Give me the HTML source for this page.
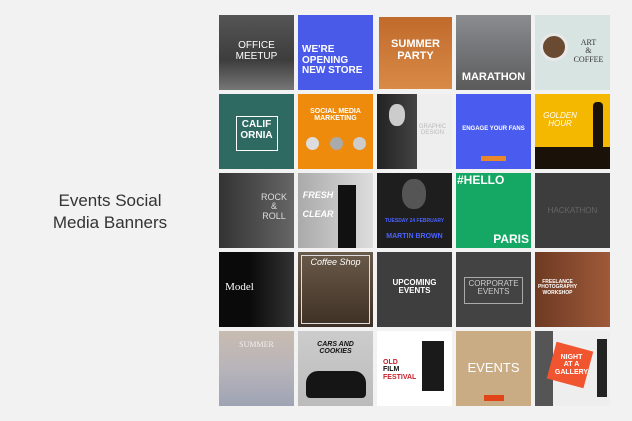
<!DOCTYPE html><html><head><style>
body{margin:0;width:632px;height:421px;background:#f2f2f2;position:relative;overflow:hidden;font-family:"Liberation Sans",sans-serif}
.t{position:absolute;width:75px;height:75px;overflow:hidden;color:#fff;text-align:center;font-weight:bold}
.c{position:absolute;left:0;right:0;line-height:1.05}
.h{position:absolute;left:0;top:0;width:632px}
</style></head><body>
<div style="position:absolute;left:30px;top:190px;width:160px;text-align:center;font-size:17px;color:#333;line-height:22px">Events Social<br>Media Banners</div>

<!-- row1 -->
<div class="t" style="left:219px;top:15px;background:linear-gradient(#555,#3d3d3d 60%,#777)"><div class="c" style="top:26px;font-size:10px;font-weight:normal">OFFICE<br>MEETUP</div></div>
<div class="t" style="left:298px;top:15px;background:#4a5ae8"><div class="c" style="top:30px;font-size:10px;text-align:left;left:4px">WE'RE<br>OPENING<br>NEW STORE</div></div>
<div class="t" style="left:379px;top:17px;width:73px;height:72px;background:linear-gradient(#c06a2c,#d98a46)"><div class="c" style="top:22px;font-size:11px">SUMMER<br>PARTY</div></div>
<div class="t" style="left:456px;top:15px;background:linear-gradient(#8a8c90,#5b5b5b)"><div class="c" style="top:57px;font-size:11px">MARATHON</div></div>
<div class="t" style="left:535px;top:15px;background:#d8e4e2;color:#333"><div style="position:absolute;left:5px;top:18px;width:22px;height:22px;border-radius:50%;background:#6a4a30;border:3px solid #e8e8e8"></div><div class="c" style="left:32px;top:24px;font-size:8px;font-family:'Liberation Serif',serif;font-weight:normal">ART<br>&amp;<br>COFFEE</div></div>

<!-- row2 -->
<div class="t" style="left:219px;top:94px;background:#2f6a62"><div style="position:absolute;left:17px;top:22px;width:40px;height:33px;border:1px solid #fff"></div><div class="c" style="top:26px;font-size:10px">CALIF<br>ORNIA</div></div>
<div class="t" style="left:298px;top:94px;background:#ee8a0c"><div class="c" style="top:14px;font-size:7px">SOCIAL MEDIA<br>MARKETING</div><div style="position:absolute;top:43px;left:8px;width:13px;height:13px;border-radius:50%;background:#ddd;box-shadow:24px 0 #aaa,47px 0 #ccc"></div></div>
<div class="t" style="left:377px;top:94px;background:#eee"><div style="position:absolute;left:0;top:0;width:40px;height:75px;background:linear-gradient(90deg,#222,#444)"></div><div style="position:absolute;left:12px;top:10px;width:16px;height:22px;border-radius:45%;background:#ccc"></div><div class="c" style="left:36px;top:30px;font-size:6px;color:#bbb;font-weight:normal">GRAPHIC<br>DESIGN</div></div>
<div class="t" style="left:456px;top:94px;background:#4a5cf0"><div class="c" style="top:32px;font-size:6px">ENGAGE YOUR FANS</div><div style="position:absolute;left:25px;top:62px;width:25px;height:5px;background:#e8882a"></div></div>
<div class="t" style="left:535px;top:94px;background:#f5b800"><div class="c" style="top:18px;left:-25px;font-size:8px;font-style:italic;font-weight:normal">GOLDEN<br>HOUR</div><div style="position:absolute;left:0;bottom:0;width:75px;height:22px;background:#1a1208"></div><div style="position:absolute;left:58px;top:8px;width:10px;height:48px;background:#1a1208;border-radius:4px"></div></div>

<!-- row3 -->
<div class="t" style="left:219px;top:173px;background:linear-gradient(90deg,#333,#666)"><div class="c" style="top:20px;left:35px;font-size:9px;font-weight:normal;color:#ddd">ROCK<br>&amp;<br>ROLL</div></div>
<div class="t" style="left:298px;top:173px;background:linear-gradient(90deg,#aaa,#ddd)"><div class="c" style="top:18px;left:-35px;font-size:9px;font-style:italic">FRESH<br><br>CLEAR</div><div style="position:absolute;left:40px;top:12px;width:18px;height:63px;background:#111"></div></div>
<div class="t" style="left:377px;top:173px;background:#1e1e1e"><div style="position:absolute;left:25px;top:6px;width:24px;height:30px;border-radius:45%;background:#555"></div><div class="c" style="top:46px;font-size:5px;color:#4a62ff">TUESDAY 24 FEBRUARY</div><div class="c" style="top:60px;font-size:7px;color:#4a62ff">MARTIN BROWN</div></div>
<div class="t" style="left:456px;top:173px;background:#15a865"><div class="c" style="top:1px;left:-8px;font-size:12px;text-align:left;left:1px">#HELLO</div><div class="c" style="top:60px;font-size:12px;text-align:right;right:2px">PARIS</div></div>
<div class="t" style="left:535px;top:173px;background:#3d3d3d"><div class="c" style="top:34px;font-size:8px;font-weight:normal;color:#666">HACKATHON</div></div>

<!-- row4 -->
<div class="t" style="left:219px;top:252px;background:linear-gradient(90deg,#0a0a0a 40%,#333)"><div class="c" style="top:30px;left:-34px;font-size:11px;font-family:'Liberation Serif',serif;font-weight:normal">Model</div></div>
<div class="t" style="left:298px;top:252px;background:linear-gradient(#6a5a4a,#3e3024)"><div style="position:absolute;left:3px;top:3px;right:3px;bottom:3px;border:1px solid #ddd"></div><div class="c" style="top:6px;font-size:9px;font-style:italic;font-weight:normal">Coffee Shop</div></div>
<div class="t" style="left:377px;top:252px;background:#3e3e3e"><div class="c" style="top:27px;font-size:8px">UPCOMING<br>EVENTS</div></div>
<div class="t" style="left:456px;top:252px;background:#434343"><div style="position:absolute;left:8px;top:25px;width:57px;height:25px;border:1px solid #aaa"></div><div class="c" style="top:28px;font-size:8px;font-weight:normal;color:#ccc">CORPORATE<br>EVENTS</div></div>
<div class="t" style="left:535px;top:252px;background:linear-gradient(90deg,#6e3a22,#9e5a3a)"><div class="c" style="top:28px;left:-30px;font-size:5px">FREELANCE<br>PHOTOGRAPHY<br>WORKSHOP</div></div>

<!-- row5 -->
<div class="t" style="left:219px;top:331px;background:linear-gradient(#c8bcb0,#b8b4ba 50%,#9ea4b4)"><div class="c" style="top:10px;font-size:8px;font-family:'Liberation Serif',serif;font-weight:normal;color:#eee">SUMMER</div></div>
<div class="t" style="left:298px;top:331px;background:linear-gradient(#ccc,#bbb)"><div class="c" style="top:10px;font-size:7px;color:#111;font-style:italic">CARS AND<br>COOKIES</div><div style="position:absolute;left:8px;top:40px;width:60px;height:27px;border-radius:12px 12px 4px 4px;background:#151515"></div></div>
<div class="t" style="left:377px;top:331px;background:#fff"><div class="c" style="top:28px;left:6px;text-align:left;font-size:7px;color:#c8202a">OLD<br><span style="color:#111">FILM</span><br>FESTIVAL</div><div style="position:absolute;left:45px;top:10px;width:22px;height:50px;background:#1a1a1a"></div></div>
<div class="t" style="left:456px;top:331px;background:#c9ab84"><div class="c" style="top:30px;font-size:13px;font-weight:normal">EVENTS</div><div style="position:absolute;left:28px;top:64px;width:20px;height:6px;background:#e04418"></div></div>
<div class="t" style="left:535px;top:331px;background:#eee"><div style="position:absolute;left:0;top:0;width:18px;height:75px;background:#555"></div><div style="position:absolute;left:16px;top:15px;width:38px;height:38px;background:#f05530;transform:rotate(15deg)"></div><div class="c" style="top:23px;left:-2px;font-size:7px">NIGHT<br>AT A<br>GALLERY</div><div style="position:absolute;left:62px;top:8px;width:10px;height:58px;background:#222"></div></div>
</body></html>
